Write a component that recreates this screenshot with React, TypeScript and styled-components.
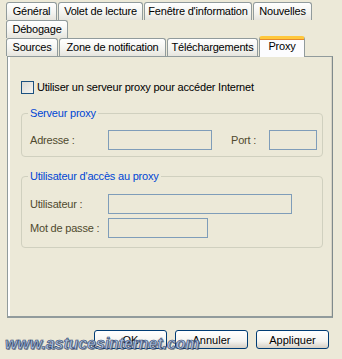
import React from 'react';
import styled, { createGlobalStyle, css } from 'styled-components';

const Global = createGlobalStyle`
  html, body {
    margin: 0;
    padding: 0;
    background: #ece9d8;
  }
  body {
    font-family: Tahoma, "Liberation Sans", Arial, sans-serif;
    font-size: 11px;
    letter-spacing: -0.2px;
  }
`;

const Dialog = styled.div`
  position: relative;
  width: 342px;
  height: 359px;
  background: #ece9d8;
  overflow: hidden;
`;

const Tabs = styled.div`
  display: flex;
  flex-direction: column;
  padding: 2px 0 0 6px;
`;

const TabRow = styled.div`
  display: flex;
  height: 18px;
  align-items: flex-end;
`;

const Tab = styled.div<{ $w: number; $active?: boolean }>`
  box-sizing: border-box;
  width: ${p => p.$w}px;
  height: 18px;
  margin-right: 1px;
  padding-top: 2px;
  text-align: center;
  color: #000;
  border: 1px solid #919b9c;
  border-bottom: none;
  border-radius: 3px 3px 0 0;
  background: linear-gradient(#ffffff, #f3f3ef 60%, #e6e5de);
  white-space: nowrap;

  ${p =>
    p.$active &&
    css`
      position: relative;
      z-index: 2;
      height: 21px;
      margin-bottom: -1px;
      background: #fcfcfe;
      border-top: 3px solid #ffc83c;
      box-shadow: inset 0 1px 0 #e68b2c;
      padding-top: 1px;
    `}
`;

const Panel = styled.div`
  box-sizing: border-box;
  margin-left: 7px;
  width: 326px;
  height: 262px;
  border: 1px solid #919b9c;
  border-right-color: #7f8a8c;
  border-bottom: 2px solid #919b9c;
  box-shadow: inset 2px 0 0 #ffffff, inset -1px 0 0 #d6d3c6;
  padding: 23px 0 0 13px;
  display: flex;
  flex-direction: column;
`;

const CheckRow = styled.label`
  display: flex;
  align-items: center;
  gap: 3px;
  height: 14px;
  color: #000;
`;

const Box = styled.span`
  box-sizing: border-box;
  width: 13px;
  height: 13px;
  border: 1px solid #1c5180;
  background: linear-gradient(135deg, #dcdbd5, #f5f4f0);
`;

const Group = styled.fieldset<{ $h: number; $top: number }>`
  box-sizing: border-box;
  margin: ${p => p.$top}px 0 0 0;
  width: 302px;
  height: ${p => p.$h}px;
  border: 1px solid #d0d0bf;
  border-radius: 4px;
  padding: 0 0 0 8px;
  position: relative;
`;

const Legend = styled.legend`
  color: #0046d5;
  padding: 0 2px;
  margin-left: -2px;
  line-height: 13px;
`;

const FieldRow = styled.div<{ $top: number }>`
  display: flex;
  align-items: center;
  height: 20px;
  margin-top: ${p => p.$top}px;
`;

const FieldLabel = styled.span<{ $w: number; $gap?: number }>`
  width: ${p => p.$w}px;
  margin-left: ${p => p.$gap ?? 0}px;
  color: #4f4a2e;
  white-space: nowrap;
`;

const Input = styled.div<{ $w: number }>`
  box-sizing: border-box;
  width: ${p => p.$w}px;
  height: 20px;
  border: 1px solid #7f9db9;
  background: #ece9d8;
`;

const ButtonRow = styled.div`
  display: flex;
  justify-content: flex-end;
  gap: 8px;
  padding: 12px 13px 0 0;
`;

const Button = styled.button`
  box-sizing: border-box;
  width: 73px;
  height: 19px;
  font: inherit;
  color: #000;
  border: 1px solid #003c74;
  border-radius: 3px;
  background: linear-gradient(#ffffff, #f4f4f0 60%, #d6d0c5);
  padding: 0;
`;

const Watermark = styled.div`
  position: absolute;
  left: 5px;
  top: 335px;
  font-family: "Liberation Sans", Arial, sans-serif;
  font-size: 16px;
  font-weight: bold;
  font-style: italic;
  letter-spacing: -0.1px;
  color: #a8c0e0;
  -webkit-text-stroke: 0.6px #2b3e6a;
  text-shadow: 1px 1px 0 rgba(40, 50, 80, 0.5);
  white-space: nowrap;
  z-index: 5;
`;

export default function App() {
  return (
    <Dialog>
      <Global />
      <Tabs>
        <TabRow>
          <Tab $w={51}>Général</Tab>
          <Tab $w={85}>Volet de lecture</Tab>
          <Tab $w={108}>Fenêtre d'information</Tab>
          <Tab $w={59}>Nouvelles</Tab>
        </TabRow>
        <TabRow>
          <Tab $w={62}>Débogage</Tab>
        </TabRow>
        <TabRow>
          <Tab $w={52}>Sources</Tab>
          <Tab $w={107}>Zone de notification</Tab>
          <Tab $w={91}>Téléchargements</Tab>
          <Tab $w={46} $active>Proxy</Tab>
        </TabRow>
      </Tabs>
      <Panel>
        <CheckRow>
          <Box />
          Utiliser un serveur proxy pour accéder Internet
        </CheckRow>
        <Group $h={50} $top={13}>
          <Legend>Serveur proxy</Legend>
          <FieldRow $top={10}>
            <FieldLabel $w={78}>Adresse :</FieldLabel>
            <Input $w={104} />
            <FieldLabel $w={38} $gap={19}>Port :</FieldLabel>
            <Input $w={48} />
          </FieldRow>
        </Group>
        <Group $h={78} $top={13}>
          <Legend>Utilisateur d'accès au proxy</Legend>
          <FieldRow $top={11}>
            <FieldLabel $w={78}>Utilisateur :</FieldLabel>
            <Input $w={184} />
          </FieldRow>
          <FieldRow $top={4}>
            <FieldLabel $w={78}>Mot de passe :</FieldLabel>
            <Input $w={100} />
          </FieldRow>
        </Group>
      </Panel>
      <ButtonRow>
        <Button>OK</Button>
        <Button>Annuler</Button>
        <Button>Appliquer</Button>
      </ButtonRow>
      <Watermark>www.astucesinternet.com</Watermark>
    </Dialog>
  );
}
